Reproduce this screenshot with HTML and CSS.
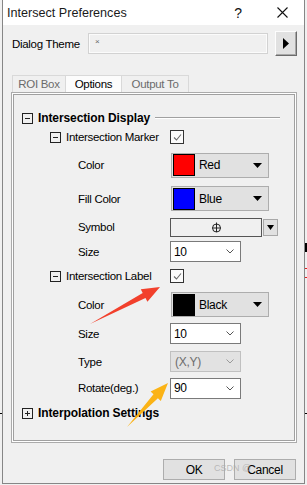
FILE: index.html
```html
<!DOCTYPE html>
<html>
<head>
<meta charset="utf-8">
<link rel="stylesheet" href="styles.css">
</head>
<body>
<div class="bg-mark mark-black"></div>
<div class="bg-mark mark-red1"></div>
<div class="bg-mark mark-red2"></div>
<div class="bg-mark tick-l"></div>
<div class="bg-mark tick-r"></div>

<div class="window">
  <div class="titlebar">
    <span class="title">Intersect Preferences</span>
    <span class="help">?</span>
    <svg class="close" width="11" height="11" viewBox="0 0 11 11"><path d="M0.5 0.5L10.5 10.5M10.5 0.5L0.5 10.5" stroke="#111" stroke-width="1.1" fill="none"/></svg>
  </div>

  <div class="content">
    <div class="theme-row">
      <span class="theme-label">Dialog Theme</span>
      <div class="theme-box"><span class="theme-x">×</span></div>
      <div class="arrow-btn"><svg width="6" height="11" viewBox="0 0 6 11"><polygon points="0,0 6,5.5 0,11" fill="#000"/></svg></div>
    </div>

    <div class="tabs">
      <div class="tab t1">ROI Box</div>
      <div class="tab t2 active">Options</div>
      <div class="tab t3">Output To</div>
    </div>

    <div class="panel">
      <div class="group">
        <div class="tree">
          <div class="row head">
            <div class="lbl lv0">
              <svg class="exp" width="11" height="11" viewBox="0 0 11 11"><rect x="0.5" y="0.5" width="10" height="10" fill="none" stroke="#222"/><path d="M3 5.5H8" stroke="#222"/></svg>
              <span class="htext">Intersection Display</span>
              <span class="rule"></span>
            </div>
          </div>

          <div class="row">
            <div class="lbl lv1">
              <svg class="exp" width="11" height="11" viewBox="0 0 11 11"><rect x="0.5" y="0.5" width="10" height="10" fill="none" stroke="#222"/><path d="M3 5.5H8" stroke="#222"/></svg>
              <span>Intersection Marker</span>
            </div>
            <div class="chk"><svg width="11" height="11" viewBox="0 0 11 11"><path d="M2 5.5L4.5 8L9 2.5" stroke="#6a6a6a" stroke-width="1.1" fill="none"/></svg></div>
          </div>

          <div class="row">
            <div class="lbl lv2">Color</div>
            <div class="colordd">
              <span class="swatch sw-red"></span>
              <span class="ddtext">Red</span>
              <svg class="ddtri" width="9" height="5" viewBox="0 0 9 5"><polygon points="0,0 9,0 4.5,5" fill="#000"/></svg>
            </div>
          </div>

          <div class="row">
            <div class="lbl lv2">Fill Color</div>
            <div class="colordd">
              <span class="swatch sw-blue"></span>
              <span class="ddtext">Blue</span>
              <svg class="ddtri" width="9" height="5" viewBox="0 0 9 5"><polygon points="0,0 9,0 4.5,5" fill="#000"/></svg>
            </div>
          </div>

          <div class="row">
            <div class="lbl lv2">Symbol</div>
            <div class="symwrap">
              <div class="symfield"><svg width="11" height="11" viewBox="0 0 11 11"><circle cx="5.5" cy="6" r="4" fill="none" stroke="#222"/><path d="M5.5 0.5V10M1.5 6H9.5" stroke="#222"/></svg></div>
              <div class="symbtn"><svg width="7" height="5" viewBox="0 0 7 5"><polygon points="0,0 7,0 3.5,5" fill="#000"/></svg></div>
            </div>
          </div>

          <div class="row">
            <div class="lbl lv2">Size</div>
            <div class="combo"><span>10</span><svg class="chev" width="8" height="5" viewBox="0 0 8 5"><path d="M0.5 0.5L4 4L7.5 0.5" stroke="#555" fill="none"/></svg></div>
          </div>

          <div class="row">
            <div class="lbl lv1">
              <svg class="exp" width="11" height="11" viewBox="0 0 11 11"><rect x="0.5" y="0.5" width="10" height="10" fill="none" stroke="#222"/><path d="M3 5.5H8" stroke="#222"/></svg>
              <span>Intersection Label</span>
            </div>
            <div class="chk"><svg width="11" height="11" viewBox="0 0 11 11"><path d="M2 5.5L4.5 8L9 2.5" stroke="#6a6a6a" stroke-width="1.1" fill="none"/></svg></div>
          </div>

          <div class="row">
            <div class="lbl lv2">Color</div>
            <div class="colordd">
              <span class="swatch sw-black"></span>
              <span class="ddtext">Black</span>
              <svg class="ddtri" width="9" height="5" viewBox="0 0 9 5"><polygon points="0,0 9,0 4.5,5" fill="#000"/></svg>
            </div>
          </div>

          <div class="row">
            <div class="lbl lv2">Size</div>
            <div class="combo"><span>10</span><svg class="chev" width="8" height="5" viewBox="0 0 8 5"><path d="M0.5 0.5L4 4L7.5 0.5" stroke="#555" fill="none"/></svg></div>
          </div>

          <div class="row">
            <div class="lbl lv2">Type</div>
            <div class="combo disabled"><span>(X,Y)</span><svg class="chev" width="8" height="5" viewBox="0 0 8 5"><path d="M0.5 0.5L4 4L7.5 0.5" stroke="#999" fill="none"/></svg></div>
          </div>

          <div class="row">
            <div class="lbl lv2">Rotate(deg.)</div>
            <div class="combo"><span>90</span><svg class="chev" width="8" height="5" viewBox="0 0 8 5"><path d="M0.5 0.5L4 4L7.5 0.5" stroke="#555" fill="none"/></svg></div>
          </div>

          <div class="row head">
            <div class="lbl lv0">
              <svg class="exp" width="11" height="11" viewBox="0 0 11 11"><rect x="0.5" y="0.5" width="10" height="10" fill="none" stroke="#222"/><path d="M3 5.5H8M5.5 3V8" stroke="#222"/></svg>
              <span class="htext">Interpolation Settings</span>
            </div>
          </div>
        </div>
      </div>
    </div>

    <div class="buttons">
      <div class="btn">OK</div>
      <div class="btn">Cancel</div>
    </div>
  </div>
</div>

<svg class="annot" width="307" height="485" viewBox="0 0 307 485">
  <polygon points="90,324 145.5,298.1 147.4,301.7 160,287 140.8,289.3 142.7,292.9" fill="#f2402c"/>
  <polygon points="127,427 157.9,398.2 160.8,401 168,383 150.6,391.4 153.5,394.2" fill="#fbb316"/>
</svg>
<div class="watermark">CSDN @</div>
</body>
</html>
```

FILE: styles.css
```css
html, body {
  margin: 0;
  padding: 0;
}
body {
  width: 307px;
  height: 485px;
  overflow: hidden;
  position: relative;
  background: #f0f0f0;
  font-family: "Liberation Sans", Arial, sans-serif;
  font-size: 11.5px;
  letter-spacing: -0.3px;
  color: #000;
}

/* things behind the dialog */
.bg-mark { position: absolute; }
.mark-black { left: 304px; top: 243px; width: 3px; height: 9px; background: #000; }
.mark-red1 { left: 304px; top: 268px; width: 3px; height: 1px; background: #e02020; }
.mark-red2 { left: 304px; top: 277px; width: 3px; height: 1px; background: #e02020; }
.tick-l { left: 0; top: 413px; width: 2px; height: 1px; background: #000; }
.tick-r { left: 305px; top: 413px; width: 2px; height: 1px; background: #000; }

.window {
  position: relative;
  z-index: 1;
  margin-left: 2px;
  width: 303px;
  height: 484px;
  box-sizing: border-box;
  border: 1px solid #868686;
  border-top: none;
  background: #f0f0f0;
}

.titlebar {
  height: 25px;
  background: #fff;
  display: flex;
  align-items: center;
  padding-left: 4px;
}
.title {
  flex: 1;
  font-size: 12.6px;
  letter-spacing: 0;
  color: #1a1a1a;
}
.help {
  font-size: 14px;
  letter-spacing: 0;
  color: #111;
  margin-right: 35px;
}
.close {
  margin-right: 16px;
}

.content {
  padding: 0 7px 0 8px;
}

.theme-row {
  display: flex;
  align-items: center;
  height: 25px;
  margin-top: 6px;
}
.theme-label {
  margin-left: 1px;
  width: 76px;
}
.theme-box {
  width: 180px;
  height: 21px;
  box-sizing: border-box;
  border: 1px solid #d2d2d2;
  box-shadow: inset 0 0 0 1px #fbfbfb;
  background: #f0f0f0;
  padding: 3px 0 0 6px;
}
.theme-x {
  display: block;
  font-size: 8px;
  line-height: 9px;
  color: #666;
}
.arrow-btn {
  margin-left: auto;
  width: 22px;
  height: 25px;
  box-sizing: border-box;
  border: 1px solid;
  border-color: #fdfdfd #6b6b6b #6b6b6b #fdfdfd;
  box-shadow: inset -1px -1px 0 #a8a8a8;
  background: #e1e1e1;
  display: flex;
  align-items: center;
  justify-content: center;
}

.tabs {
  display: flex;
  margin-top: 19px;
  padding-left: 1px;
  height: 17px;
}
.tab {
  height: 17px;
  box-sizing: border-box;
  border: 1px solid #d9d9d9;
  border-bottom: none;
  text-align: center;
  line-height: 16px;
  color: #6b6b6b;
  background: #f0f0f0;
}
.tab + .tab { margin-left: -1px; }
.t1 { width: 54px; }
.t2 { width: 57px; }
.t3 { width: 68px; }
.tab.active {
  background: #fcfcfc;
  color: #000;
}

.panel {
  height: 351px;
  box-sizing: border-box;
  border: 1px solid #ababab;
  background: #fff;
  padding: 1px;
  display: flex;
}
.group {
  flex: 1;
  border: 1px solid #a0a0a0;
  background: #f0f0f0;
}

.tree {
  display: grid;
  grid-template-rows: 20px 18px 38px 29px 28px 21px 28px 29px 29px 27px 26px 24px;
  padding-top: 13px;
}
.row {
  display: grid;
  grid-template-columns: 156px 1fr;
  align-items: center;
}
.row.head {
  grid-template-columns: 1fr;
}
.lbl {
  display: flex;
  align-items: center;
  white-space: nowrap;
}
.lv0 { padding-left: 8px; }
.lv1 { padding-left: 36px; }
.lv2 { padding-left: 64px; }
.exp {
  flex: none;
  margin-right: 5px;
}
.htext {
  font-weight: bold;
  font-size: 12px;
  letter-spacing: -0.1px;
}
.rule {
  flex: 1;
  height: 0;
  border-top: 1px solid #a0a0a0;
  border-bottom: 1px solid #fff;
  margin: 0 14px 0 5px;
}

.chk {
  width: 14px;
  height: 14px;
  box-sizing: border-box;
  border: 1px solid #333;
  background: #fbfbfb;
  display: flex;
  align-items: center;
  justify-content: center;
}

.colordd {
  margin-left: 1px;
  width: 98px;
  height: 25px;
  box-sizing: border-box;
  border: 1px solid #adadad;
  background: #e1e1e1;
  display: flex;
  align-items: center;
  padding-left: 1px;
}
.swatch {
  width: 22px;
  height: 22px;
  box-sizing: border-box;
  border: 1px solid #000;
  flex: none;
}
.sw-red { background: #ff0000; }
.sw-blue { background: #0000ff; }
.sw-black { background: #000; }
.ddtext {
  flex: 1;
  margin-left: 4px;
  font-size: 12px;
  letter-spacing: -0.3px;
}
.ddtri {
  margin-right: 6px;
}

.symwrap {
  display: flex;
  align-items: center;
  gap: 1px;
}
.symfield {
  width: 92px;
  height: 19px;
  box-sizing: border-box;
  border: 1px solid #555;
  background: #f0f0f0;
  display: flex;
  align-items: center;
  justify-content: center;
}
.symbtn {
  width: 15px;
  height: 17px;
  box-sizing: border-box;
  border: 1px solid #a8a8a8;
  background: #e1e1e1;
  display: flex;
  align-items: center;
  justify-content: center;
}

.combo {
  width: 71px;
  height: 21px;
  box-sizing: border-box;
  border: 1px solid #7a7a7a;
  background: #fff;
  display: flex;
  align-items: center;
  padding-left: 3px;
  font-size: 12px;
  letter-spacing: -0.3px;
}
.combo span { flex: 1; }
.chev { margin-right: 6px; }
.combo.disabled {
  background: #e2e2e2;
  border-color: #c0c0c0;
  color: #6d6d6d;
  padding-left: 4px;
}

.buttons {
  display: flex;
  justify-content: flex-end;
  gap: 9px;
  margin-top: 16px;
  padding-right: 1px;
}
.btn {
  width: 62px;
  height: 21px;
  box-sizing: border-box;
  border: 1px solid #adadad;
  background: #e1e1e1;
  display: flex;
  align-items: center;
  justify-content: center;
  font-size: 12px;
}

.annot {
  position: absolute;
  left: 0;
  top: 0;
  z-index: 5;
  pointer-events: none;
}
.watermark {
  position: absolute;
  z-index: 6;
  left: 214px;
  top: 463px;
  font-size: 9px;
  letter-spacing: 0;
  color: rgba(170, 170, 170, 0.75);
}
```
